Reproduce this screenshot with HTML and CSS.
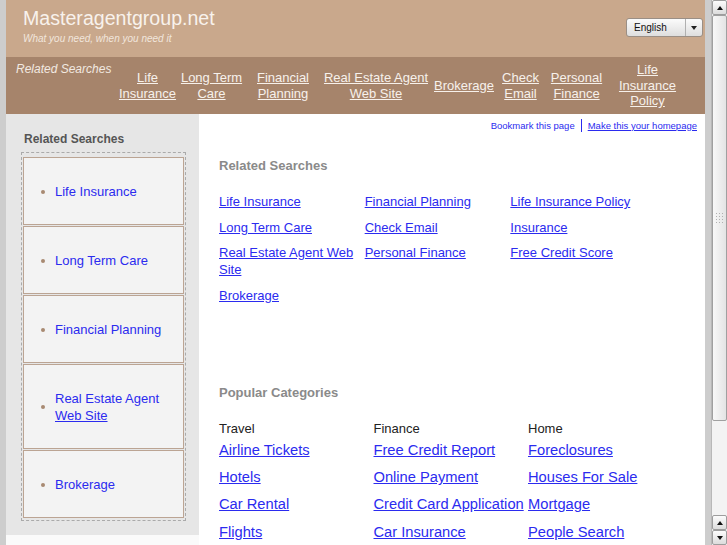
FILE: index.html
```html
<!DOCTYPE html>
<html lang="en">

<head>
    <meta charset="UTF-8">
    <title>Masteragentgroup.net</title>
    <link rel="stylesheet" href="styles.css">
</head>

<body>

    <div class="frame">
        <div class="page">

            <div class="header">
                <div class="brand">
                    <div class="site-name">Masteragentgroup.net</div>
                    <div class="tagline">What you need, when you need it</div>
                </div>
                <div class="lang-select">
                    <span class="lang-text">English</span>
                    <span class="lang-arrow"></span>
                </div>
            </div>

            <div class="nav">
                <div class="nav-label">Related Searches</div>
                <div class="nav-cell"><a href="#">Life Insurance</a></div>
                <div class="nav-cell"><a href="#">Long Term Care</a></div>
                <div class="nav-cell"><a href="#">Financial Planning</a></div>
                <div class="nav-cell"><a href="#">Real Estate Agent Web Site</a></div>
                <div class="nav-cell"><a href="#">Brokerage</a></div>
                <div class="nav-cell"><a href="#">Check Email</a></div>
                <div class="nav-cell"><a href="#">Personal Finance</a></div>
                <div class="nav-cell"><a href="#">Life Insurance Policy</a></div>
            </div>

            <div class="main">
                <!-- left column -->
                <div class="sidebar">
                    <div class="side-title">Related Searches</div>
                    <ul class="side-list">
                        <li><a href="#">Life Insurance</a></li>
                        <li><a href="#">Long Term Care</a></li>
                        <li><a href="#">Financial Planning</a></li>
                        <li><a href="#">Real Estate Agent <span class="hover">Web Site</span></a></li>
                        <li><a href="#">Brokerage</a></li>
                    </ul>
                </div>

                <!-- right column -->
                <div class="content">
                    <div class="top-links">
                        <a href="#" class="bookmark">Bookmark this page</a>
                        <span class="sep"></span>
                        <a href="#">Make this your homepage</a>
                    </div>

                    <h2 class="section-title">Related Searches</h2>
                    <div class="search-grid">
                        <a href="#">Life Insurance</a>
                        <a href="#">Financial Planning</a>
                        <a href="#">Life Insurance Policy</a>
                        <a href="#">Long Term Care</a>
                        <a href="#">Check Email</a>
                        <a href="#">Insurance</a>
                        <a href="#">Real Estate Agent Web Site</a>
                        <a href="#">Personal Finance</a>
                        <a href="#">Free Credit Score</a>
                        <a href="#">Brokerage</a>
                    </div>

                    <h2 class="section-title popular">Popular Categories</h2>
                    <div class="categories">
                        <div class="cat">
                            <div class="cat-name">Travel</div>
                            <a href="#">Airline Tickets</a>
                            <a href="#">Hotels</a>
                            <a href="#">Car Rental</a>
                            <a href="#">Flights</a>
                        </div>
                        <div class="cat">
                            <div class="cat-name">Finance</div>
                            <a href="#">Free Credit Report</a>
                            <a href="#">Online Payment</a>
                            <a href="#">Credit Card Application</a>
                            <a href="#">Car Insurance</a>
                        </div>
                        <div class="cat">
                            <div class="cat-name">Home</div>
                            <a href="#">Foreclosures</a>
                            <a href="#">Houses For Sale</a>
                            <a href="#">Mortgage</a>
                            <a href="#">People Search</a>
                        </div>
                    </div>
                </div>
            </div>

        </div>
    </div>

    <!-- window scrollbar -->
    <div class="scrollbar">
        <div class="sb-btn up"></div>
        <div class="sb-thumb"><span class="grip"></span></div>
        <div class="sb-track"></div>
        <div class="sb-btn up"></div>
        <div class="sb-btn down"></div>
    </div>

</body>

</html>
```

FILE: styles.css
```css
body {
    margin: 0;
    height: 545px;
    overflow: hidden;
    display: flex;
    background: #cdcdcd;
    font-family: "Liberation Sans", Arial, sans-serif;
}

a {
    color: #2b2bef;
}

.frame {
    flex: 1;
    display: flex;
    justify-content: center;
}

.page {
    width: 699px;
    background: #fafafa;
}

/* header */

.header {
    height: 57px;
    box-sizing: border-box;
    padding: 7px 2px 0 17px;
    display: flex;
    justify-content: space-between;
    align-items: flex-start;
    background: #c9a88c;
}

.site-name {
    font-size: 19.6px;
    line-height: 23px;
    color: #f8f2ec;
}

.tagline {
    margin-top: 3px;
    font-size: 10px;
    line-height: 12px;
    font-style: italic;
    color: #f1e6dc;
}

.lang-select {
    margin-top: 11px;
    width: 77px;
    height: 19px;
    box-sizing: border-box;
    display: flex;
    border: 1px solid #9a8f86;
    border-radius: 3px;
    background: linear-gradient(#fbfbfb, #dedede);
}

.lang-text {
    flex: 1;
    padding-left: 7px;
    font-size: 10px;
    line-height: 17px;
    color: #111;
}

.lang-arrow {
    width: 16px;
    border-left: 1px solid #b0b0b0;
    display: flex;
    align-items: center;
    justify-content: center;
}

.lang-arrow::after {
    content: "";
    border-left: 3.5px solid transparent;
    border-right: 3.5px solid transparent;
    border-top: 4px solid #222;
}

/* nav bar */

.nav {
    height: 57px;
    box-sizing: border-box;
    padding-left: 10px;
    display: flex;
    align-items: center;
    background: #a6846b;
}

.nav-label {
    width: 101px;
    align-self: flex-start;
    margin-top: 5px;
    font-size: 12px;
    line-height: 14px;
    font-style: italic;
    color: #f2e9e1;
}

.nav-cell {
    text-align: center;
    font-size: 13px;
    line-height: 15.5px;
}

.nav-cell a {
    color: #f7f1eb;
}

.nav-cell:nth-child(2) { width: 61px; }
.nav-cell:nth-child(3) { width: 67px; }
.nav-cell:nth-child(4) { width: 76px; }
.nav-cell:nth-child(5) { width: 110px; }
.nav-cell:nth-child(6) { width: 66px; }
.nav-cell:nth-child(7) { width: 47px; }
.nav-cell:nth-child(8) { width: 65px; }
.nav-cell:nth-child(9) { width: 77px; }

/* main */

.main {
    display: flex;
    align-items: flex-start;
}

.sidebar {
    width: 193px;
    box-sizing: border-box;
    padding: 17.5px 13px 14px 15px;
    background: #e6e6e6;
}

.side-title {
    margin-bottom: 5.5px;
    padding-left: 3px;
    font-size: 12px;
    line-height: 15px;
    font-weight: bold;
    color: #555;
}

.side-list {
    list-style: none;
    margin: 0;
    padding: 4px 1px 2px;
    border: 1px dashed #aaa;
}

.side-list li {
    display: flex;
    align-items: center;
    gap: 10px;
    margin-bottom: 1px;
    padding: 25px 4px 24px 17px;
    border: 1px solid #bba493;
    background: #f3f3f3;
    font-size: 13px;
    line-height: 17px;
}

.side-list li:last-child {
    margin-bottom: 0;
}

.side-list li::before {
    content: "";
    flex: none;
    width: 4px;
    height: 4px;
    border-radius: 50%;
    background: #a88a72;
}

.side-list a {
    text-decoration: none;
}

.side-list .hover {
    text-decoration: underline;
}

.content {
    flex: 1;
    min-height: 440px;
    padding: 5px 8px 0 20px;
    background: #fff;
}

.top-links {
    display: flex;
    justify-content: flex-end;
    align-items: center;
    font-size: 9.5px;
    line-height: 12px;
}

.top-links .bookmark {
    text-decoration: none;
}

.sep {
    width: 1px;
    height: 13px;
    margin: 0 6px;
    background: #2b2bef;
}

.section-title {
    margin: 26px 0 0;
    font-size: 13px;
    line-height: 16px;
    color: #8a8a8a;
}

.search-grid {
    width: 437px;
    margin-top: 19px;
    display: grid;
    grid-template-columns: repeat(3, 1fr);
    row-gap: 8.5px;
    font-size: 13px;
    line-height: 17px;
    align-items: start;
}

.search-grid a {
    justify-self: start;
    padding-right: 8px;
}

.section-title.popular {
    margin-top: 81.5px;
}

.categories {
    margin-top: 20px;
    display: flex;
}

.cat {
    width: 154.5px;
    display: flex;
    flex-direction: column;
    align-items: flex-start;
}

.cat-name {
    font-size: 13px;
    line-height: 16px;
    color: #222;
    margin-bottom: 4px;
}

.cat a {
    font-size: 14.7px;
    line-height: 18px;
    margin-bottom: 9.2px;
    white-space: nowrap;
}

/* scrollbar */

.scrollbar {
    width: 16px;
    flex: none;
    display: flex;
    flex-direction: column;
    box-sizing: border-box;
    border-left: 1px solid #b8b8b8;
    background: #f3f3f3;
}

.sb-btn {
    height: 15px;
    flex: none;
    box-sizing: border-box;
    display: flex;
    align-items: center;
    justify-content: center;
    border: 1px solid #9d9d9d;
    border-radius: 2px;
    background: linear-gradient(#fcfcfc, #dcdcdc);
}

.sb-btn::after {
    content: "";
    border-left: 3.5px solid transparent;
    border-right: 3.5px solid transparent;
}

.sb-btn.up::after {
    border-bottom: 4px solid #111;
}

.sb-btn.down::after {
    border-top: 4px solid #111;
}

.sb-thumb {
    height: 406px;
    flex: none;
    box-sizing: border-box;
    display: flex;
    align-items: center;
    justify-content: center;
    border: 1px solid #a0a0a0;
    border-radius: 2px;
    background: linear-gradient(to right, #f8f8f8, #e4e4e4);
}

.grip {
    width: 9px;
    height: 13px;
    background: radial-gradient(circle, #b0b0b0 0.8px, transparent 1px) 0 0 / 3px 3px;
}

.sb-track {
    flex: 1;
}
```
